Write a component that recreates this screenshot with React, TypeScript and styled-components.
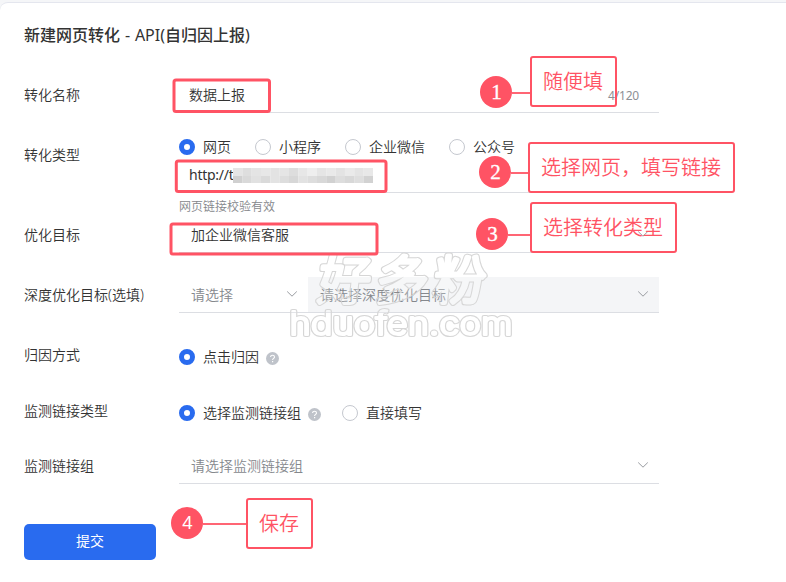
import React from "react";
import styled, { createGlobalStyle } from "styled-components";

const GlobalStyle = createGlobalStyle`
  * { box-sizing: border-box; }
  body {
    margin: 0;
    background: #f5f6f8;
    font-family: "Noto Sans", "Noto Sans CJK SC", sans-serif;
    font-size: 14px;
    font-weight: 350;
    color: #333;
    overflow: hidden;
  }
`;

const Page = styled.div`
  position: relative;
  width: 786px;
  height: 582px;
  padding-top: 2px;
`;

const Panel = styled.main`
  height: 580px;
  padding: 16px 24px 0;
  background: #fff;
  border-top: 1px solid #e4e6ee;
  border-top-left-radius: 8px;
`;

const Title = styled.h1`
  height: 32px;
  margin: 0 0 27px;
  font-size: 16px;
  line-height: 32px;
  font-weight: 500;
  word-spacing: 0.7px;
  white-space: nowrap;
`;

const TitleLatin = styled.span`
  font-weight: 400;
`;

const Row = styled.section<{ $height: number }>`
  display: grid;
  grid-template-columns: 155px 480px;
  height: ${(p) => p.$height}px;
`;

const Label = styled.span<{ $line?: number }>`
  line-height: ${(p) => p.$line ?? 36}px;
`;

const Control = styled.div`
  display: flex;
  flex-direction: column;
`;

const Field = styled.div<{ $inset?: number; $muted?: boolean; $filled?: boolean; $width?: number }>`
  display: flex;
  align-items: center;
  justify-content: space-between;
  width: ${(p) => (p.$width ? `${p.$width}px` : "100%")};
  height: 36px;
  padding: 0 10px 1px ${(p) => p.$inset ?? 12}px;
  border-bottom: 1px solid #dcdee3;
  background: ${(p) => (p.$filled ? "#f4f5f7" : "transparent")};
  color: ${(p) => (p.$muted ? "#85888d" : "#333")};
`;

const InputField = styled(Field)`
  height: 35px;
  padding-right: 20px;
  padding-bottom: 2px;
`;

const UrlField = styled(Field)`
  margin-top: 1px;
  padding-bottom: 0;
  justify-content: flex-start;
`;

const UrlText = styled.span`
  width: 44px;
  font-weight: 400;
  font-size: 14px;
  letter-spacing: -0.25px;
`;

const Split = styled.div`
  display: flex;
`;

const Counter = styled.span`
  margin-top: 2px;
  font-size: 12px;
  font-weight: 400;
  letter-spacing: -0.2px;
  color: #8d9095;
`;

const Hint = styled.p`
  margin: 0;
  padding-top: 2px;
  font-size: 12px;
  line-height: 24px;
  color: #85878b;
`;

const Radios = styled.div<{ $top?: number }>`
  display: flex;
  gap: 24px;
  height: 18px;
  margin-top: ${(p) => p.$top ?? 0}px;
`;

const Option = styled.span`
  display: flex;
  align-items: center;
  gap: 8px;
`;

const OptionText = styled.span`
  margin-top: -2px;
`;

const Dot = styled.i<{ $on?: boolean }>`
  width: 16px;
  height: 16px;
  border-radius: 50%;
  background: #fff;
  border: ${(p) => (p.$on ? "5px solid #296bef" : "1px solid #c5c8cf")};
`;

const Submit = styled.button`
  display: block;
  width: 132px;
  height: 36px;
  padding: 0 0 2px;
  border: 0;
  border-radius: 5px;
  background: #296bef;
  color: #fff;
  font: 400 14px/34px "Noto Sans", "Noto Sans CJK SC", sans-serif;
`;

const HelpIcon = styled.svg`
  margin: 2px -3px 0 -1px;
`;

const Overlay = styled.div`
  position: absolute;
  inset: 0;
  pointer-events: none;
`;

const Frame = styled.svg`
  position: absolute;
  left: 0;
  top: 0;
`;

const Callout = styled.div<{ $x: number; $y: number }>`
  position: absolute;
  left: ${(p) => p.$x}px;
  top: ${(p) => p.$y}px;
  display: flex;
  align-items: flex-start;
  color: #ff5364;
`;

const Badge = styled.span<{ $drop: number; $sans?: boolean }>`
  width: 32px;
  height: 32px;
  margin-top: ${(p) => p.$drop}px;
  border-radius: 50%;
  background: #ff5364;
  color: #fff;
  text-align: center;
  font-family: ${(p) => (p.$sans ? '"Noto Sans"' : '"Liberation Serif"')}, serif;
  font-weight: 400;
  font-size: ${(p) => (p.$sans ? 18 : 21)}px;
  -webkit-text-stroke: ${(p) => (p.$sans ? 0 : 0.35)}px #fff;
  line-height: ${(p) => (p.$sans ? 31 : 32)}px;
`;

const Connector = styled.span<{ $w: number; $drop: number }>`
  width: ${(p) => p.$w}px;
  height: 2px;
  margin-top: ${(p) => p.$drop + 15.5}px;
  background: #ff6574;
`;

const Note = styled.span<{ $w: number }>`
  width: ${(p) => p.$w}px;
  height: 51px;
  padding-left: 11px;
  border: 2px solid #ff5364;
  border-radius: 3px;
  font-size: 20px;
  line-height: 47px;
  white-space: nowrap;
`;

const Watermark = styled.svg`
  position: absolute;
  left: 0;
  top: 0;
`;

const Chevron = () => (
  <svg width="12" height="8" viewBox="0 0 12 8" fill="none" stroke="#999ca1">
    <path d="M1.2 1.5 6 6.2l4.8-4.7" />
  </svg>
);

const Help = () => (
  <HelpIcon width="13" height="13" viewBox="0 0 13 13" fill="none">
    <circle cx="6.5" cy="6.5" r="6.5" fill="#bfc3ca" />
    <path d="M4.6 5.1c0-2.6 3.9-2.4 3.9-.1 0 1.4-1.9 1.4-1.9 3" stroke="#fff" strokeWidth="1.1" />
    <path d="M6 9h1.2v1.2H6z" fill="#fff" />
  </HelpIcon>
);

const mosaic = [
  ["#e5e5e5", "#dedede", "#e4e4e4", "#e7e7e7", "#e3e3e3", "#e5e5e5", "#dddddd", "#e7e7e7", "#eeeeee", "#e5e5e5", "#e9e9e9", "#e3e3e3", "#eaeaea", "#e4e4e4", "#e8e8e8"],
  ["#d0d0d0", "#d9d9d9", "#e1e1e1", "#dadada", "#e3e3e3", "#dddddd", "#d7d7d7", "#e2e2e2", "#dddddd", "#d8d8d8", "#d1d1d1", "#dddddd", "#d8d8d8", "#dedede", "#d2d2d2"],
];

const Mosaic = () => (
  <svg width="140" height="16">
    {mosaic.map((line, y) =>
      line.map((fill, x) => (
        <rect key={`${x}-${y}`} x={x * 9.33} y={y ? 9 : 1} width="9.4" height={y ? 7 : 8} fill={fill} />
      )),
    )}
  </svg>
);

const MarkText = ({ cjkStroke, latinStroke }: { cjkStroke: number; latinStroke: number }) => (
  <g strokeLinejoin="round">
    <text
      transform="translate(317 298.5) skewX(-6)"
      fontFamily="Noto Sans CJK SC"
      fontWeight="300"
      fontSize="52"
      letterSpacing="5.5"
      strokeWidth={cjkStroke}
    >
      好多粉
    </text>
    <text
      x="289.5"
      y="335"
      fontFamily="Inter"
      fontWeight="300"
      fontSize="32"
      textLength="223"
      lengthAdjust="spacingAndGlyphs"
      strokeWidth={latinStroke}
    >
      hduofen.com
    </text>
  </g>
);

const SiteMark = () => (
  <Watermark width="786" height="582">
    <mask id="outline" maskUnits="userSpaceOnUse" x="0" y="0" width="786" height="582">
      <g fill="#fff" stroke="#fff">
        <MarkText cjkStroke={6.4} latinStroke={4.2} />
      </g>
      <g fill="#000" stroke="#000">
        <MarkText cjkStroke={4.4} latinStroke={2.2} />
      </g>
    </mask>
    <g fill="#fff" stroke="#fff" opacity="0.2">
      <MarkText cjkStroke={5} latinStroke={3} />
    </g>
    <rect width="786" height="582" fill="#d6d6d6" mask="url(#outline)" />
  </Watermark>
);

const frames = [
  { x: 174, y: 80, w: 95.5, h: 31.5 },
  { x: 176.3, y: 161, w: 209.7, h: 30.5 },
  { x: 171, y: 224, w: 206, h: 30 },
];

const notes = [
  { n: 1, x: 480.4, y: 56.4, drop: 20, line: 17.6, w: 87.4, text: "随便填" },
  { n: 2, x: 479.4, y: 142.4, drop: 14, line: 16.6, w: 207.4, text: "选择网页，填写链接" },
  { n: 3, x: 476.4, y: 202.4, drop: 16, line: 21.6, w: 147.4, text: "选择转化类型" },
  { n: 4, x: 171.4, y: 498.4, drop: 9, line: 42.6, w: 67.4, text: "保存" },
];

export default function App() {
  return (
    <Page>
      <GlobalStyle />
      <Panel>
        <Title>新建网页转化<TitleLatin> - API(</TitleLatin>自归因上报<TitleLatin>)</TitleLatin></Title>
        <Row $height={60}>
          <Label $line={34}>转化名称</Label>
          <Control>
            <InputField $inset={10}>
              数据上报<Counter>4/120</Counter>
            </InputField>
          </Control>
        </Row>
        <Row $height={79}>
          <Label $line={34}>转化类型</Label>
          <Control>
            <Radios>
              <Option><Dot $on /><OptionText>网页</OptionText></Option>
              <Option><Dot /><OptionText>小程序</OptionText></Option>
              <Option><Dot /><OptionText>企业微信</OptionText></Option>
              <Option><Dot /><OptionText>公众号</OptionText></Option>
            </Radios>
            <UrlField $inset={10}>
              <UrlText>http://t</UrlText><Mosaic />
            </UrlField>
            <Hint>网页链接校验有效</Hint>
          </Control>
        </Row>
        <Row $height={60}>
          <Label>优化目标</Label>
          <Control>
            <Field>加企业微信客服<Chevron /></Field>
          </Control>
        </Row>
        <Row $height={60}>
          <Label>深度优化目标(选填)</Label>
          <Split>
            <Field $muted $width={129}>请选择<Chevron /></Field>
            <Field $muted $filled $width={351}>请选择深度优化目标<Chevron /></Field>
          </Split>
        </Row>
        <Row $height={56}>
          <Label>归因方式</Label>
          <Radios $top={11}>
            <Option><Dot $on /><OptionText>点击归因</OptionText><Help /></Option>
          </Radios>
        </Row>
        <Row $height={55}>
          <Label>监测链接类型</Label>
          <Radios $top={11}>
            <Option><Dot $on /><OptionText>选择监测链接组</OptionText><Help /></Option>
            <Option><Dot /><OptionText>直接填写</OptionText></Option>
          </Radios>
        </Row>
        <Row $height={76}>
          <Label>监测链接组</Label>
          <Control>
            <Field $muted>请选择监测链接组<Chevron /></Field>
          </Control>
        </Row>
        <Submit>提交</Submit>
      </Panel>
      <Overlay>
        <SiteMark />
        <Frame width="786" height="582" fill="none" stroke="#ff5364" strokeWidth="3">
          {frames.map((f) => (
            <rect key={f.y} x={f.x} y={f.y} width={f.w} height={f.h} rx="2" />
          ))}
        </Frame>
        {notes.map((a) => (
          <Callout key={a.n} $x={a.x} $y={a.y}>
            <Badge $drop={a.drop} $sans={a.n === 4}>{a.n}</Badge>
            <Connector $w={a.line} $drop={a.drop} />
            <Note $w={a.w}>{a.text}</Note>
          </Callout>
        ))}
      </Overlay>
    </Page>
  );
}
